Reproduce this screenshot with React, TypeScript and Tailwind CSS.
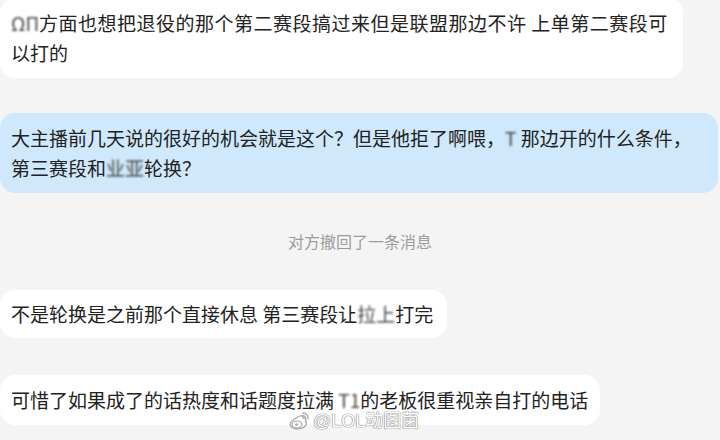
import React from "react";

const font = { fontFamily: '"Noto Sans CJK SC", "Noto Sans", sans-serif' };

function Blur({ children }: { children: React.ReactNode }) {
  return <span className="inline-block text-[#444] blur-[1.2px]">{children}</span>;
}

function WeiboLogo() {
  return (
    <svg width="22" height="20" viewBox="0 0 22 20" fill="none">
      <path
        d="M9 6.5C12 4 15.5 4.5 15.2 7.2C17.5 6.8 18.8 8.6 17.4 10.6C19 11.4 19 14.8 14.5 16.8C10 18.8 3.2 17.8 2.2 14.2C1.4 11.4 5 8.6 9 6.5Z"
        fill="white"
        stroke="#a8a8a8"
        strokeWidth="1.3"
      />
      <ellipse cx="9" cy="13.4" rx="5" ry="3.4" fill="white" stroke="#a8a8a8" strokeWidth="1.2" />
      <circle cx="8.4" cy="13.6" r="1.4" fill="#a8a8a8" />
      <path d="M14.5 2.2C17.8 1.6 20.6 4.2 20 7.6" stroke="#a8a8a8" strokeWidth="1.4" strokeLinecap="round" />
      <path d="M14.8 4.6C16.4 4.4 17.8 5.6 17.5 7.2" stroke="#a8a8a8" strokeWidth="1.3" strokeLinecap="round" />
    </svg>
  );
}

export default function App() {
  return (
    <div
      className="relative flex h-[440px] w-[720px] flex-col overflow-hidden bg-[#f4f4f4] text-[19px] text-[#222]"
      style={font}
    >
      <div className="-mt-[2px] w-[683px] rounded-[15px] bg-white py-[10px] pl-[11px] leading-[30px]">
        <Blur>ΩΠ</Blur>
        <span className="tracking-[0.5px]">方面也想把退役的那个第二赛段搞过来但是联盟那边不许 上单第二赛段可</span>
        <br />
        以打的
      </div>

      <div className="mt-[35px] w-[718px] rounded-[15px] bg-[#cfe8fb] py-[10px] pl-[11px] leading-[30px]">
        大主播前几天说的很好的机会就是这个？但是他拒了啊喂，<Blur>T</Blur> 那边开的什么条件，
        <br />
        第三赛段和<Blur>业</Blur>
        <Blur>亚</Blur>轮换？
      </div>

      <div className="mt-[36px] text-center text-[16px] leading-[24px] text-[#9c9c9c]">
        对方撤回了一条消息
      </div>

      <div className="mt-[37px] w-[447px] rounded-[15px] bg-white py-[9px] pl-[11px] leading-[30px]">
        不是轮换是之前那个直接休息 第三赛段让<Blur>拉上</Blur>打完
      </div>

      <div className="mt-[37px] w-[600px] rounded-[15px] bg-white py-[10px] pl-[11px] leading-[30px]">
        可惜了如果成了的话热度和话题度拉满 <Blur>T1</Blur>的老板很重视亲自打的电话
      </div>

      <div className="absolute left-[288px] top-[409px] flex items-center gap-[3px]">
        <WeiboLogo />
        <span
          className="text-[18px] leading-[24px] text-white [text-shadow:0_0_1px_#888,0_0_1px_#888,0_0_1px_#888]"
          style={{ fontFamily: '"Liberation Sans", "Noto Sans CJK SC", sans-serif' }}
        >
          @LOL动图菌
        </span>
      </div>
    </div>
  );
}
